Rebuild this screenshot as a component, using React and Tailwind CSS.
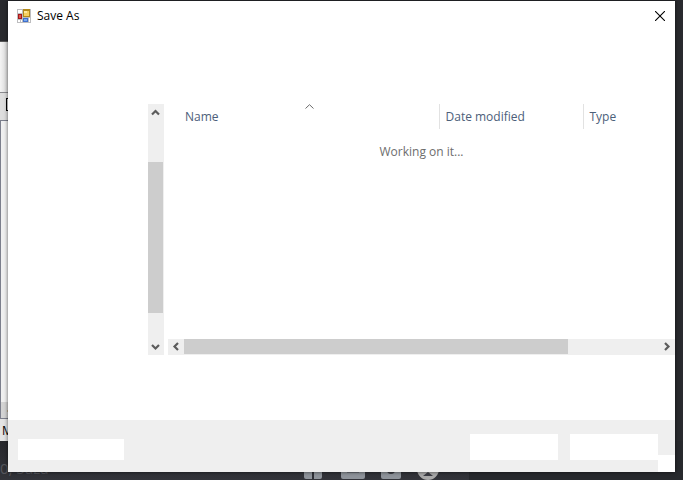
import React from "react";

const chevrons = {
  up: "M1 6.5 4.5 3 8 6.5",
  down: "M1 3 4.5 6.5 8 3",
  left: "M6 1 2.5 4.5 6 8",
  right: "M3 1 6.5 4.5 3 8",
};

function Arrow({ direction, label, className }) {
  return (
    <button type="button" aria-label={label} className={`flex shrink-0 items-center ${className}`}>
      <svg viewBox="0 0 9 9" className="h-[9px] w-[9px]" fill="none" stroke="#5c5c5c" strokeWidth="2.2">
        <path d={chevrons[direction]} />
      </svg>
    </button>
  );
}

function AppIcon() {
  return (
    <svg viewBox="0 0 14 14" className="h-[14px] w-[14px]" shapeRendering="crispEdges" aria-hidden="true">
      <rect width="14" height="14" fill="#bdbdbf" />
      <rect x="1" y="1" width="4" height="3" fill="#fff" />
      <rect x="1" y="11" width="2" height="2" fill="#fff" />
      <rect x="4" y="11" width="1" height="2" fill="#fff" />
      <rect x="12" y="9" width="1" height="4" fill="#fff" />
      <rect x="6" y="0" width="7" height="8" fill="#b38a1c" />
      <rect x="7" y="2" width="5" height="5" fill="#f6d060" />
      <rect x="7" y="2" width="3" height="2" fill="#ffe99e" />
      <rect x="1" y="5" width="4" height="5" fill="#a3171b" />
      <rect x="2" y="6" width="2" height="3" fill="#df5548" />
      <rect x="6" y="9" width="5" height="4" fill="#3f6fcb" />
      <rect x="7" y="10" width="3" height="2" fill="#75a8f2" />
    </svg>
  );
}

function BackgroundWindow() {
  return (
    <div className="absolute top-[41px] bottom-[39px] left-0 flex w-10 flex-col overflow-hidden border-t border-[#555] bg-[#e4e4e4]">
      <div className="h-[50px] bg-linear-to-r from-[#f4f4f4] from-0% to-[#d8d8d8] to-20%" />
      <div className="flex h-7 items-center border-t border-[#8a8a8e] bg-[#dedede] pb-1 pl-[6px]">
        <div className="h-[13px] w-3 border border-black" />
      </div>
      <div className="flex flex-1 flex-col justify-end border-t border-b border-l border-[#7c7f8c] bg-[#f0f0f0]">
        <div className="h-4 bg-[#d4d4d4] pl-[6px] text-[8px] leading-4 text-[#444]">◂</div>
      </div>
      <div className="h-[22px] pl-[2px] text-[12px] leading-6 text-black">M</div>
    </div>
  );
}

function Taskbar() {
  return (
    <div className="absolute inset-x-0 bottom-0 flex h-[39px] justify-between overflow-hidden bg-linear-to-b from-[#27282c] to-[#33343a]">
      <div className="self-end text-[15px] leading-[24px] whitespace-nowrap text-[#55565c]">0, 5aza</div>
      <svg viewBox="8 1 379 39" className="h-[39px] w-[379px] shrink-0" aria-hidden="true">
        <rect x="173" width="214" height="40" fill="#27292d" />
        <rect x="8" y="20" width="18" height="19" rx="2" fill="#8f949b" />
        <path d="M17 20v19" stroke="#303138" strokeWidth="2" />
        <rect x="45" y="20" width="24" height="19" rx="2" fill="#8f949b" />
        <path d="M51 32.5h12" stroke="#6c7078" strokeWidth="1" />
        <rect x="85" y="20" width="20" height="19" rx="2" fill="#8f949b" />
        <circle cx="95" cy="30" r="4" fill="#3c3d44" />
        <circle cx="132" cy="29" r="11" fill="#aaa" />
        <path d="m127 36 5-4 5 4z" fill="#3c3d44" />
      </svg>
    </div>
  );
}

function VerticalScrollbar() {
  return (
    <div className="flex w-4 shrink-0 flex-col bg-[#efefef]">
      <Arrow direction="up" label="Scroll up" className="h-[17px] pl-[3px]" />
      <div className="flex-1 pt-[41px] pr-px">
        <div className="h-[151px] bg-[#cdcdcd]" />
      </div>
      <Arrow direction="down" label="Scroll down" className="h-[17px] pl-[3px]" />
    </div>
  );
}

function HorizontalScrollbar() {
  return (
    <div className="flex h-4 shrink-0 bg-[#efefef]">
      <Arrow direction="left" label="Scroll left" className="w-4 pb-px pl-1" />
      <div className="flex-1 pb-px">
        <div className="h-full w-[81%] max-w-[384px] bg-[#cdcdcd]" />
      </div>
      <Arrow direction="right" label="Scroll right" className="w-4 pb-px pl-[3px]" />
    </div>
  );
}

function FileList() {
  return (
    <div className="flex min-w-0 flex-1 flex-col">
      <table className="w-full table-fixed border-collapse">
        <thead>
          <tr className="h-[25px] text-left text-[#4c607a]">
            <th className="relative w-[271px] pl-[17px] font-normal">
              Name
              <span className="absolute inset-x-0 top-0 flex justify-center pl-3">
                <svg viewBox="0 0 9 5" className="h-[5px] w-[9px]" fill="none" stroke="#6b6b6b" aria-hidden="true">
                  <path d="M.5 4.5 4.5.7l4 3.8" />
                </svg>
              </span>
            </th>
            <th className="w-[144px] border-l border-[#e2e2e2] pl-[6px] font-normal">Date modified</th>
            <th className="border-l border-[#e2e2e2] pl-[6px] font-normal">Type</th>
          </tr>
        </thead>
        <tbody>
          <tr className="h-[46px]">
            <td colSpan={3} className="text-center text-[#6d6d6d]">Working on it...</td>
          </tr>
        </tbody>
      </table>
      <div className="flex-1" />
      <HorizontalScrollbar />
    </div>
  );
}

export default function App() {
  return (
    <div className="relative h-screen overflow-hidden bg-[#292a2e] font-['Open_Sans','Noto_Sans',sans-serif] text-[12px] leading-4">
      <Taskbar />
      <BackgroundWindow />
      <div role="dialog" aria-labelledby="dialog-title" className="absolute inset-x-2 top-px bottom-2 flex flex-col bg-white shadow-[0_0_4px_#000000a0]">
        <header className="flex h-[30px] shrink-0 items-center pr-[9px] pl-[9px]">
          <AppIcon />
          <h1 id="dialog-title" className="ml-[6px] flex-1 text-black">Save As</h1>
          <button type="button" aria-label="Close" className="flex h-3 w-3 items-center justify-center">
            <svg viewBox="0 0 10 10" className="h-[10px] w-[10px]" stroke="#000" strokeWidth="1.1">
              <path d="m0 0 10 10M10 0 0 10" />
            </svg>
          </button>
        </header>
        <main className="flex flex-1 pt-[73px] pb-[65px]">
          <nav aria-label="Folders" className="w-[140px] shrink-0" />
          <VerticalScrollbar />
          <div className="w-1 shrink-0" />
          <FileList />
        </main>
        <footer className="relative flex h-[52px] shrink-0 items-end gap-3 bg-[#efefef] pr-[17px] pb-3 pl-[10px]">
          <button type="button" aria-label="Hide folders" className="mr-auto h-[21px] w-[106px] bg-white" />
          <button type="button" aria-label="Save" className="h-[26px] w-[88px] bg-white" />
          <button type="button" aria-label="Cancel" className="h-[26px] w-[88px] bg-white" />
          <div className="absolute right-0 bottom-0 h-[17px] w-[17px] bg-white" />
        </footer>
      </div>
    </div>
  );
}
